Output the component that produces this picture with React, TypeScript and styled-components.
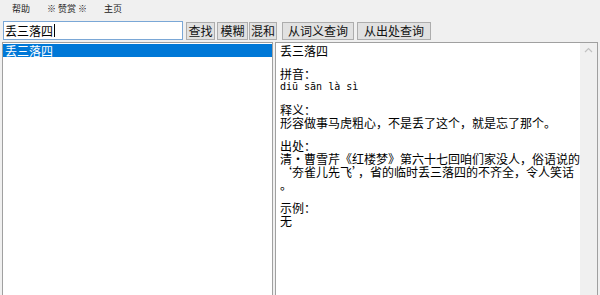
import React from "react";
import styled, { createGlobalStyle } from "styled-components";

const Global = createGlobalStyle`
  html, body { margin: 0; padding: 0; background: #f0f0f0; }
  body { font-family: "Noto Sans CJK SC", "DejaVu Sans", sans-serif; }
`;

const Window = styled.div`
  width: 600px;
  height: 295px;
  background: #f0f0f0;
  display: flex;
  flex-direction: column;
  overflow: hidden;
`;

const MenuBar = styled.div`
  height: 20px;
  display: flex;
  align-items: center;
  padding-left: 12px;
  gap: 17px;
  font-size: 9px;
  color: #222;
`;

const MenuItem = styled.span`
  line-height: 10px;
  margin-top: -2px;
`;

const Toolbar = styled.div`
  display: flex;
  align-items: center;
  height: 21px;
  padding-left: 3px;
`;

const SearchInput = styled.div`
  width: 177px;
  height: 17px;
  border: 1px solid #7aa7d6;
  background: #fff;
  font-size: 12px;
  line-height: 17px;
  padding-left: 1px;
  display: flex;
  align-items: center;
  color: #000;
`;

const Caret = styled.span`
  display: inline-block;
  width: 1px;
  height: 13px;
  background: #000;
  margin-left: 1px;
`;

const Button = styled.div<{ $w: number; $ml: number }>`
  width: ${(p) => p.$w}px;
  margin-left: ${(p) => p.$ml}px;
  height: 18px;
  box-sizing: border-box;
  border: 1px solid #adadad;
  background: #e1e1e1;
  font-size: 12px;
  line-height: 16px;
  text-align: center;
  color: #111;
`;

const Main = styled.div`
  flex: 1;
  display: flex;
  padding: 1px 2px 0 2px;
  gap: 2px;
  min-height: 0;
`;

const ListBox = styled.div`
  width: 274px;
  box-sizing: border-box;
  background: #fff;
  border: 1px solid #a0a0a0;
  border-bottom: none;
  padding-top: 1px;
`;

const ListRow = styled.div<{ $selected?: boolean }>`
  height: 13px;
  line-height: 13px;
  font-size: 12px;
  padding-left: 2px;
  background: ${(p) => (p.$selected ? "#0078d7" : "transparent")};
  color: ${(p) => (p.$selected ? "#fff" : "#000")};
`;

const Detail = styled.div`
  flex: 1;
  box-sizing: border-box;
  background: #fff;
  border: 1px solid #a0a0a0;
  border-bottom: none;
  display: flex;
`;

const DetailText = styled.div`
  flex: 1;
  padding: 1px 0 0 4px;
  font-size: 12px;
  line-height: 13px;
  color: #000;
  white-space: pre;
`;

const Para = styled.div`
  margin-bottom: 10px;
`;

const Pinyin = styled.div`
  font-family: "DejaVu Sans Mono", monospace;
  font-size: 10px;
`;

const ScrollBar = styled.div`
  width: 17px;
  background: #f0f0f0;
  display: flex;
  justify-content: center;
  padding-top: 4px;
`;

const Arrow = styled.svg`
  width: 9px;
  height: 6px;
`;

export default function App() {
  return (
    <Window>
      <Global />
      <MenuBar>
        <MenuItem>帮助</MenuItem>
        <MenuItem>※ 赞赏 ※</MenuItem>
        <MenuItem>主页</MenuItem>
      </MenuBar>
      <Toolbar>
        <SearchInput>
          丢三落四<Caret />
        </SearchInput>
        <Button $w={29} $ml={3}>查找</Button>
        <Button $w={31} $ml={2}>模糊</Button>
        <Button $w={28} $ml={1}>混和</Button>
        <Button $w={72} $ml={5}>从词义查询</Button>
        <Button $w={74} $ml={3}>从出处查询</Button>
      </Toolbar>
      <Main>
        <ListBox>
          <ListRow $selected>丢三落四</ListRow>
        </ListBox>
        <Detail>
          <DetailText>
            <Para>丢三落四</Para>
            <Para>
              拼音：
              <Pinyin>diū sān là sì</Pinyin>
            </Para>
            <Para>
              释义：{"\n"}形容做事马虎粗心，不是丢了这个，就是忘了那个。
            </Para>
            <Para>
              出处：{"\n"}清·曹雪芹《红楼梦》第六十七回咱们家没人，俗语说的{"\n"}‘夯雀儿先飞’，省的临时丢三落四的不齐全，令人笑话{"\n"}。
            </Para>
            <Para>
              示例：{"\n"}无
            </Para>
          </DetailText>
          <ScrollBar>
            <Arrow viewBox="0 0 9 6">
              <path d="M1 5 L4.5 1.5 L8 5" fill="none" stroke="#c2c2c2" strokeWidth="1.2" />
            </Arrow>
          </ScrollBar>
        </Detail>
      </Main>
    </Window>
  );
}
